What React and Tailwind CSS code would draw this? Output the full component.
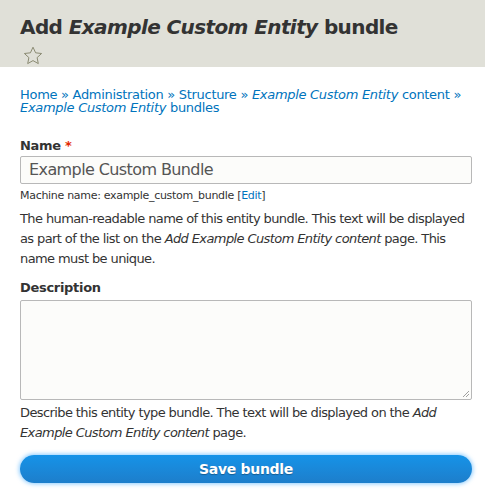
import React from "react";

function Star() {
  return (
    <svg width="20" height="19" viewBox="0 0 20 19" className="block">
      <path
        d="M10 1.2l2.6 5.6 6 .7-4.5 4.1 1.2 6-5.3-3-5.3 3 1.2-6L1.4 7.5l6-.7z"
        fill="none"
        stroke="#8a8a72"
        strokeWidth="1"
        strokeLinejoin="round"
      />
    </svg>
  );
}

export default function App() {
  const font = { fontFamily: '"DejaVu Sans", "Lucida Grande", sans-serif' };
  return (
    <div className="w-[485px] h-[497px] bg-white text-[#333] overflow-hidden" style={font}>
      {/* Header */}
      <div className="bg-[#e0e0d8] h-[67px] pl-[20px] pr-[13px] pt-[13px]">
        <h1 className="text-[20px] font-bold leading-[28px] tracking-[-0.6px] text-[#333]">
          Add <em className="italic">Example Custom Entity</em> bundle
        </h1>
        <div className="mt-[5px] ml-[3px]">
          <Star />
        </div>
      </div>

      <div className="pl-[20px] pr-[13px]">
        {/* Breadcrumb */}
        <div className="mt-[21px] text-[13px] leading-[13px] text-[#0074bd] tracking-[-0.3px]">
          <a>Home</a> » <a>Administration</a> » <a>Structure</a> »{" "}
          <a>
            <em>Example Custom Entity</em> content
          </a>{" "}
          »{" "}
          <a>
            <em>Example Custom Entity</em> bundles
          </a>
        </div>

        {/* Name */}
        <div className="mt-[24px]">
          <label className="block text-[13px] font-bold leading-[16px] tracking-[-0.3px]">
            Name <span className="text-[#e32700]">*</span>
          </label>
          <div className="mt-[2px] h-[28px] border border-[#b8b8b8] bg-[#fcfcfa] rounded-[2px] px-[8px] flex items-center text-[16px] text-[#555] tracking-[-0.6px]">
            Example Custom Bundle
          </div>
          <div className="mt-[5px] text-[11px] leading-[14px] tracking-[-0.3px]">
            Machine name: example_custom_bundle [<a className="text-[#0074bd]">Edit</a>]
          </div>
          <p className="mt-[6px] text-[13px] leading-[20px] tracking-[-0.6px]">
            The human-readable name of this entity bundle. This text will be displayed as part of
            the list on the <em>Add Example Custom Entity content</em> page. This name must be
            unique.
          </p>
        </div>

        {/* Description */}
        <div className="mt-[11px]">
          <label className="block text-[13px] font-bold leading-[16px] tracking-[-0.3px]">
            Description
          </label>
          <div className="mt-[4px] h-[100px] border border-[#b8b8b8] bg-[#fcfcfa] rounded-[2px] relative">
            <svg width="8" height="8" viewBox="0 0 8 8" className="absolute right-[1px] bottom-[1px]">
              <path d="M7 1L1 7M7 4L4 7" stroke="#888" strokeWidth="0.8" />
            </svg>
          </div>
          <p className="mt-[3px] text-[13px] leading-[20px] tracking-[-0.6px]">
            Describe this entity type bundle. The text will be displayed on the{" "}
            <em>Add Example Custom Entity content</em> page.
          </p>
        </div>

        {/* Button */}
        <button className="mt-[12px] w-full h-[28px] rounded-full bg-gradient-to-b from-[#1593e8] to-[#1d7ecb] text-white text-[14px] font-bold tracking-[-0.3px] shadow-[0_0_4px_1px_rgba(64,170,255,0.6)] [text-shadow:0_1px_1px_rgba(0,0,0,0.3)]">
          Save bundle
        </button>
      </div>
    </div>
  );
}
